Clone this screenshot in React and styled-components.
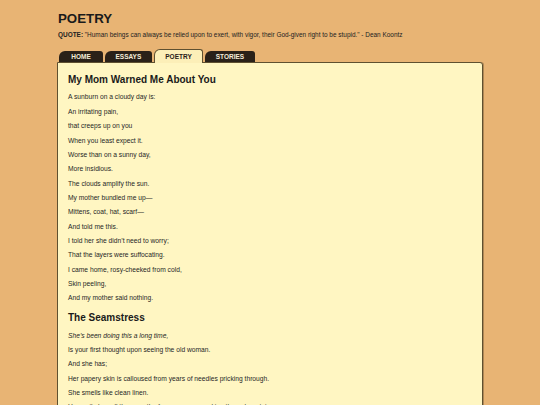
import React from "react";
import styled, { createGlobalStyle } from "styled-components";

const Global = createGlobalStyle`
  html, body { margin: 0; padding: 0; }
  body {
    background: #e8b474;
    font-family: "Liberation Sans", Arial, sans-serif;
    color: #222;
  }
`;

const Page = styled.div`
  padding: 10.5px 0 0 57px;
  width: 426px;
`;

const Title = styled.h1`
  margin: 0 0 0 1px;
  font-size: 13.3px;
  line-height: 15.3px;
  font-weight: bold;
  color: #1a1a1a;
`;

const Quote = styled.p`
  margin: 5.5px 0 0 1px;
  font-size: 6.45px;
  line-height: 7.5px;
  color: #222;
  white-space: nowrap;
  b { font-weight: bold; }
`;

const Tabs = styled.nav`
  display: flex;
  align-items: flex-end;
  gap: 2px;
  margin: 10.5px 0 0 2px;
  position: relative;
  z-index: 2;
  height: 12.5px;
`;

const Tab = styled.a`
  display: flex;
  align-items: center;
  justify-content: center;
  box-sizing: border-box;
  min-width: ${(p) => p.$min || 0}px;
  padding: 0 10.5px;
  height: ${(p) => (p.$active ? 13.5 : 10.5)}px;
  margin-bottom: ${(p) => (p.$active ? -1 : 0)}px;
  border-radius: 6px 3px 0 0;
  background: ${(p) => (p.$active ? "#fcefb8" : "#2a2118")};
  border: ${(p) => (p.$active ? "1px solid #5e5030" : "none")};
  border-bottom: none;
  color: ${(p) => (p.$active ? "#2a2118" : "#f4ecd8")};
  font-size: 6.5px;
  font-weight: bold;
  text-decoration: none;
  padding-top: ${(p) => (p.$active ? 0 : 0.5)}px;
`;

const Panel = styled.main`
  background: #fff6c2;
  border: 1px solid #5e5030;
  border-radius: 0 3px 0 0;
  box-shadow: 1px 0 0 rgba(70, 55, 30, 0.35);
  padding: 11px 10px 40px 10px;
  min-height: 400px;
  position: relative;
  z-index: 1;
`;

const PoemTitle = styled.h2`
  margin: ${(p) => (p.$first ? 0 : 6.2)}px 0 4.7px 0;
  font-size: 10px;
  line-height: 12px;
  font-weight: bold;
  color: #1a1a1a;
`;

const Line = styled.p`
  margin: 0;
  font-size: 6.7px;
  line-height: 14.35px;
  color: #262626;
  font-style: ${(p) => (p.$italic ? "italic" : "normal")};
  white-space: nowrap;
`;

const poems = [
  {
    title: "My Mom Warned Me About You",
    lines: [
      "A sunburn on a cloudy day is:",
      "An irritating pain,",
      "that creeps up on you",
      "When you least expect it.",
      "Worse than on a sunny day,",
      "More insidious.",
      "The clouds amplify the sun.",
      "My mother bundled me up\u2014",
      "Mittens, coat, hat, scarf\u2014",
      "And told me this.",
      "I told her she didn\u2019t need to worry;",
      "That the layers were suffocating.",
      "I came home, rosy-cheeked from cold,",
      "Skin peeling,",
      "And my mother said nothing.",
    ],
  },
  {
    title: "The Seamstress",
    italicFirst: true,
    lines: [
      "She\u2019s been doing this a long time,",
      "Is your first thought upon seeing the old woman.",
      "And she has;",
      "Her papery skin is calloused from years of needles pricking through.",
      "She smells like clean linen.",
      "Her smile has all the warmth of summer sun peeking through curtains.",
    ],
  },
];

const tabs = [
  { label: "HOME", min: 44 },
  { label: "ESSAYS" },
  { label: "POETRY", active: true },
  { label: "STORIES" },
];

export default function App() {
  return (
    <>
      <Global />
      <Page>
        <Title>POETRY</Title>
        <Quote>
          <b>QUOTE:</b> "Human beings can always be relied upon to exert, with vigor, their
          God-given right to be stupid." - Dean Koontz
        </Quote>
        <Tabs>
          {tabs.map((t) => (
            <Tab key={t.label} href="#" $active={t.active} $min={t.min}>
              {t.label}
            </Tab>
          ))}
        </Tabs>
        <Panel>
          {poems.map((p, i) => (
            <section key={p.title}>
              <PoemTitle $first={i === 0}>{p.title}</PoemTitle>
              {p.lines.map((l, j) => (
                <Line key={j} $italic={p.italicFirst && j === 0}>
                  {l}
                </Line>
              ))}
            </section>
          ))}
        </Panel>
      </Page>
    </>
  );
}
